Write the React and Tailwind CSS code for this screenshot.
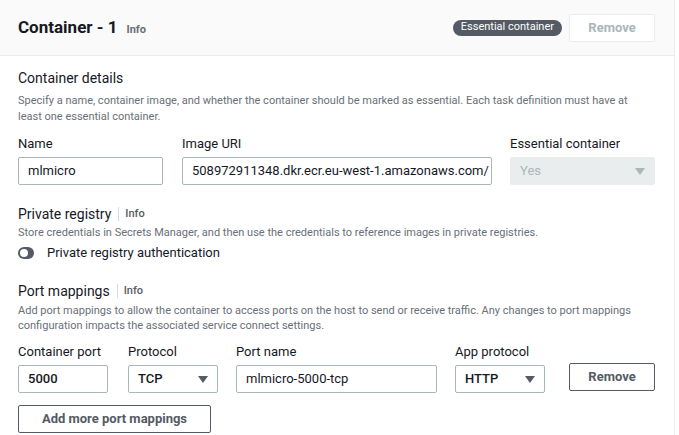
import React from 'react';

// Small filled caret used by the select boxes
function Caret({ disabled }) {
  return (
    <svg width="10" height="7" viewBox="0 0 10 7" className="shrink-0">
      <path d="M0 0h10L5 7z" fill={disabled ? '#aab7b8' : '#545b64'} />
    </svg>
  );
}

function Label({ children }) {
  return <div className="text-[13px] leading-[18px] text-[#16191f] mb-[4px]">{children}</div>;
}

function TextBox({ value, className = '' }) {
  return (
    <div
      className={`h-[28px] border border-[#aab7b8] rounded-[2px] bg-white px-[9px] flex items-center text-[13px] text-[#16191f] overflow-hidden whitespace-nowrap ${className}`}
    >
      {value}
    </div>
  );
}

function SelectBox({ value, disabled, className = '' }) {
  return (
    <div
      className={`h-[28px] rounded-[2px] px-[9px] flex items-center justify-between text-[13px] ${
        disabled
          ? 'bg-[#eaeded] text-[#aab7b8] border border-[#eaeded]'
          : 'bg-white text-[#16191f] border border-[#aab7b8] font-medium'
      } ${className}`}
    >
      <span>{value}</span>
      <Caret disabled={disabled} />
    </div>
  );
}

function SectionTitle({ title, info }) {
  return (
    <div className="flex items-center text-[14px] leading-[18px] text-[#16191f]">
      <span>{title}</span>
      {info && (
        <>
          <span className="ml-[7px] mr-[6px] w-px h-[14px] bg-[#d5dbdb]" />
          <span className="text-[11px] font-medium text-[#545b64]">Info</span>
        </>
      )}
    </div>
  );
}

export default function App() {
  return (
    <div className="w-[675px] h-[435px] overflow-hidden bg-white border-r border-[#eaeded] font-['Roboto',sans-serif]">
      {/* Header */}
      <div className="h-[56px] bg-[#fafafa] border-b border-[#eaeded] pl-[18px] pr-[19px] flex items-center justify-between">
        <div className="flex items-baseline gap-[9px]">
          <span className="text-[17px] font-bold text-[#16191f]">Container - 1</span>
          <span className="text-[11px] font-bold text-[#687078]">Info</span>
        </div>
        <div className="flex items-center gap-[7px]">
          <span className="h-[16px] px-[8px] rounded-full bg-[#545b64] text-white text-[11px] flex items-center">
            Essential container
          </span>
          <button className="w-[86px] h-[28px] border border-[#eaeded] bg-white rounded-[2px] text-[13px] font-bold text-[#aab7b8]">
            Remove
          </button>
        </div>
      </div>

      <div className="px-[18px] pt-[13px]">
        {/* Container details */}
        <SectionTitle title="Container details" />
        <p className="mt-[6px] pr-[20px] text-[11px] leading-[16px] text-[#687078]">
          Specify a name, container image, and whether the container should be marked as essential. Each task definition must have at least one essential container.
        </p>

        <div className="mt-[10px] flex">
          <div className="w-[145px]">
            <Label>Name</Label>
            <TextBox value="mlmicro" />
          </div>
          <div className="w-[310px] ml-[19px]">
            <Label>Image URI</Label>
            <TextBox value="508972911348.dkr.ecr.eu-west-1.amazonaws.com/" />
          </div>
          <div className="w-[145px] ml-[18px]">
            <Label>Essential container</Label>
            <SelectBox value="Yes" disabled />
          </div>
        </div>

        {/* Private registry */}
        <div className="mt-[20px]">
          <SectionTitle title="Private registry" info />
          <p className="mt-[2px] text-[11px] leading-[16px] text-[#687078]">
            Store credentials in Secrets Manager, and then use the credentials to reference images in private registries.
          </p>
          <div className="mt-[2px] flex items-center gap-[13px] h-[20px]">
            <span className="w-[16px] h-[12px] rounded-full bg-[#545b64] flex items-center pl-[2px]">
              <span className="w-[8px] h-[8px] rounded-full bg-white" />
            </span>
            <span className="text-[13px] text-[#16191f]">Private registry authentication</span>
          </div>
        </div>

        {/* Port mappings */}
        <div className="mt-[19px]">
          <SectionTitle title="Port mappings" info />
          <p className="mt-[3px] text-[11px] leading-[15px] text-[#687078]">
            Add port mappings to allow the container to access ports on the host to send or receive traffic. Any changes to port mappings configuration impacts the associated service connect settings.
          </p>
          <div className="mt-[10px] flex items-end">
            <div className="w-[90px]">
              <Label>Container port</Label>
              <TextBox value="5000" className="font-medium" />
            </div>
            <div className="w-[90px] ml-[20px]">
              <Label>Protocol</Label>
              <SelectBox value="TCP" />
            </div>
            <div className="w-[201px] ml-[18px]">
              <Label>Port name</Label>
              <TextBox value="mlmicro-5000-tcp" />
            </div>
            <div className="w-[90px] ml-[18px]">
              <Label>App protocol</Label>
              <SelectBox value="HTTP" />
            </div>
            <button className="ml-[24px] mb-[2px] w-[86px] h-[28px] border border-[#545b64] bg-white rounded-[2px] text-[13px] font-bold text-[#545b64]">
              Remove
            </button>
          </div>
          <button className="mt-[12px] w-[193px] h-[28px] border border-[#545b64] bg-white rounded-[2px] text-[13px] font-bold text-[#545b64]">
            Add more port mappings
          </button>
        </div>
      </div>
    </div>
  );
}
